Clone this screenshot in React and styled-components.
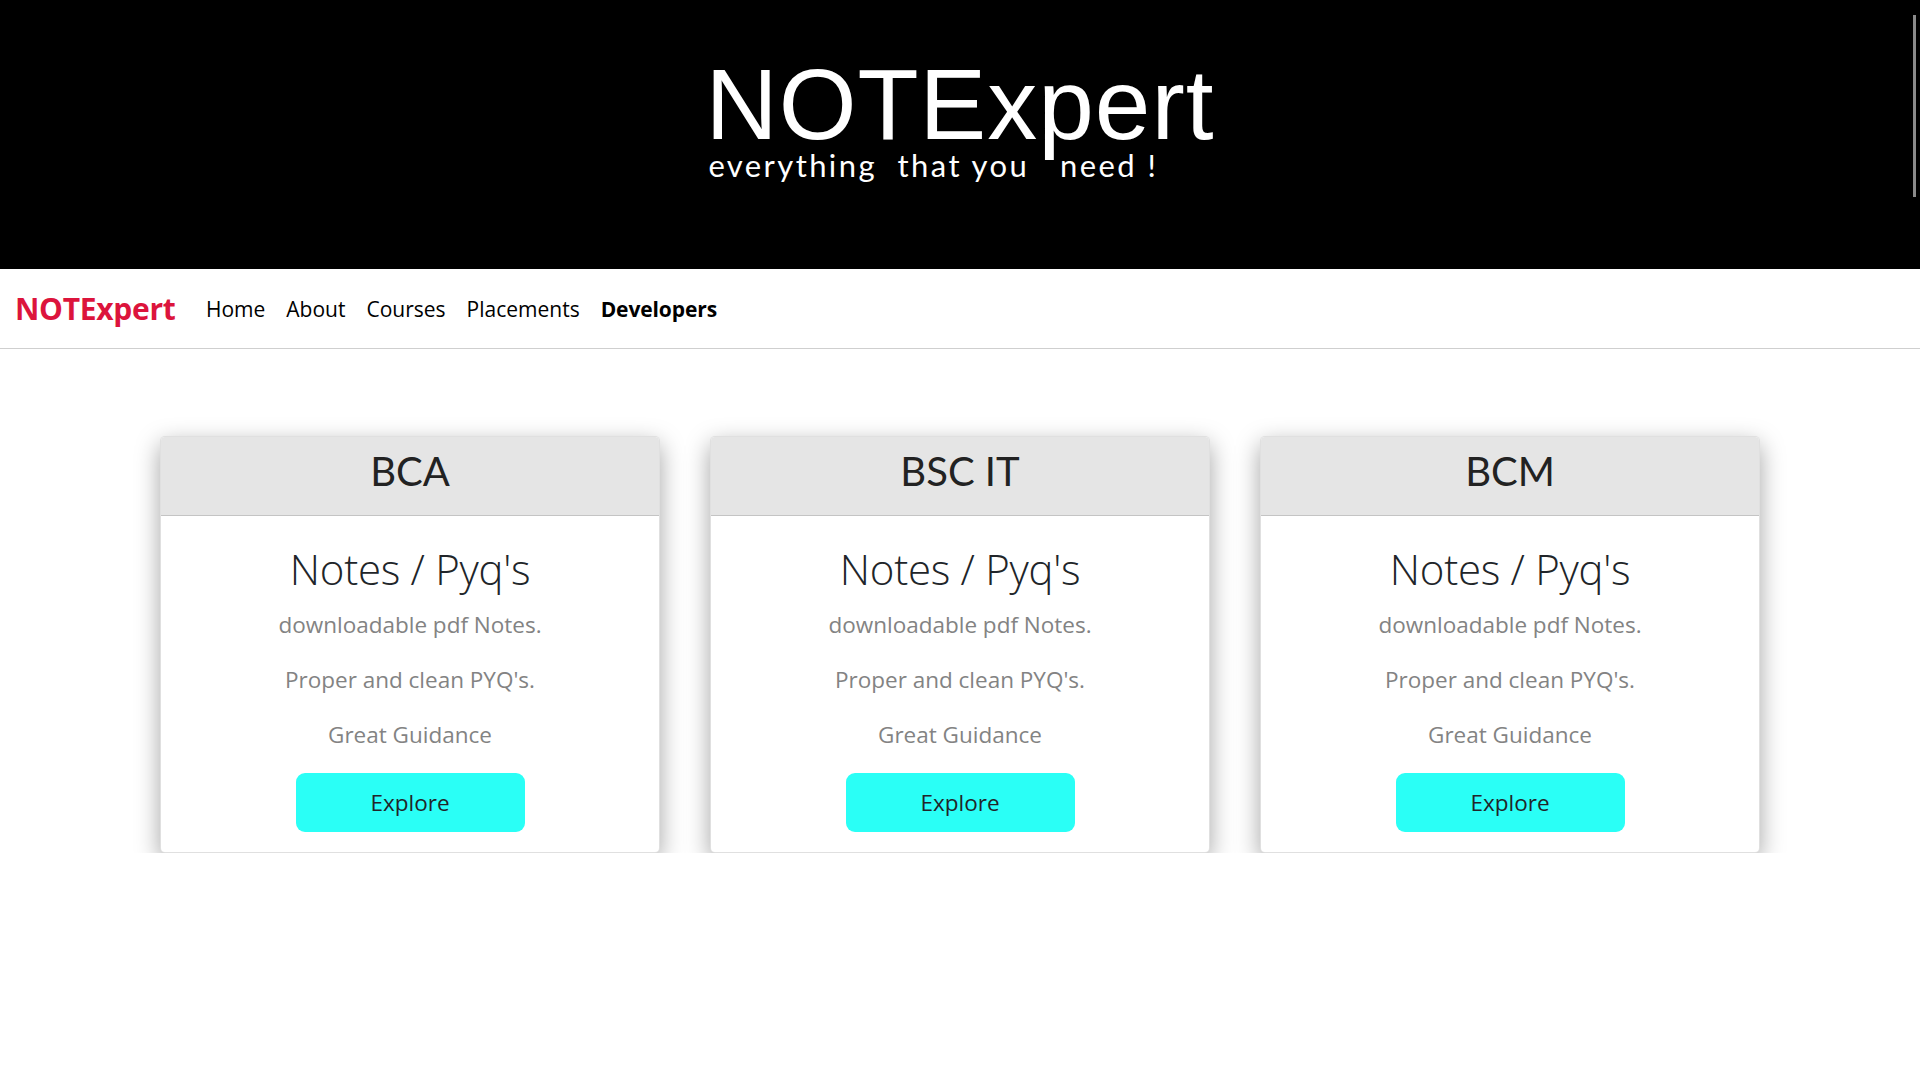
import React from 'react';
import styled, { createGlobalStyle } from 'styled-components';

const GlobalStyle = createGlobalStyle`
  * {
    box-sizing: border-box;
  }

  body {
    margin: 0;
    background: #fff;
    font-family: 'Open Sans', 'Noto Sans', sans-serif;
    color: #212529;
  }
`;

// top black banner with the big logo text
const Banner = styled.header`
  position: relative;
  height: 269px;
  background: #000;
  color: #fff;
  display: flex;
  flex-direction: column;
  align-items: center;
  padding-top: 59px;

  &::after {
    content: '';
    position: absolute;
    right: 4px;
    top: 15px;
    width: 3px;
    height: 182px;
    background: #8a8a8a;
  }
`;

const BannerInner = styled.div`
  display: flex;
  flex-direction: column;
  align-items: flex-start;
`;

const BannerTitle = styled.h1`
  margin: 0;
  font-family: 'Liberation Sans', Arial, sans-serif;
  font-weight: 400;
  font-size: 100px;
  line-height: 90px;
  letter-spacing: 1px;
`;

const BannerTagline = styled.p`
  margin: 1px 0 0 3px;
  font-family: 'Lato', 'Noto Sans', sans-serif;
  font-size: 31px;
  line-height: 1;
  white-space: pre;
  letter-spacing: 2.4px;
`;

const Navbar = styled.nav`
  height: 80px;
  display: flex;
  align-items: center;
  padding: 0 15px;
  border-bottom: 1px solid #cfcfcf;
`;

const Brand = styled.a`
  font-family: 'Open Sans', sans-serif;
  font-weight: 700;
  font-size: 30px;
  color: #dc143c;
  text-decoration: none;
  margin-right: 20px;
  letter-spacing: -0.3px;
`;

const NavLinks = styled.ul`
  display: flex;
  list-style: none;
  margin: 0;
  padding: 0;
`;

const NavLink = styled.a`
  display: block;
  padding: 0 10.5px;
  font-size: 21px;
  color: #000;
  text-decoration: none;
  font-weight: ${(p) => (p.$active ? 700 : 400)};
  letter-spacing: ${(p) => (p.$active ? '-0.1px' : '0')};
`;

const CardRow = styled.main`
  width: 1600px;
  margin: 87px auto 0;
  display: flex;
  gap: 50px;
`;

const Card = styled.section`
  flex: 1;
  background: #fff;
  border: 1px solid rgba(0, 0, 0, 0.12);
  border-radius: 5px;
  box-shadow: 0 8px 24px rgba(0, 0, 0, 0.36);
  overflow: hidden;
  text-align: center;
`;

const CardHeader = styled.div`
  height: 79px;
  background: #e5e5e5;
  border-bottom: 1px solid #c4c4c4;
  padding-top: 10px;
`;

const CardTitle = styled.h2`
  margin: 0;
  font-family: 'Lato', 'Noto Sans', sans-serif;
  font-weight: 400;
  font-size: 40px;
  line-height: 48px;
  color: #222;
`;

const CardBody = styled.div`
  padding: 26px 20px 20px;
  display: flex;
  flex-direction: column;
  align-items: center;
`;

const Heading = styled.h3`
  margin: 0 0 12px;
  font-weight: 300;
  font-size: 42px;
  line-height: 54px;
  letter-spacing: -0.3px;
  color: #212529;
`;

const Feature = styled.p`
  margin: 0 0 22px;
  font-size: 22.5px;
  line-height: 33px;
  color: #838383;
`;

const ExploreButton = styled.button`
  width: 229px;
  height: 59px;
  border: none;
  border-radius: 9px;
  background: #2afff6;
  color: #212529;
  font-family: 'Open Sans', sans-serif;
  font-size: 22.5px;
  cursor: pointer;
`;

const courses = ['BCA', 'BSC IT', 'BCM'];
const links = ['Home', 'About', 'Courses', 'Placements', 'Developers'];

const App = () => {
  return (
    <>
      <GlobalStyle />
      <Banner>
        <BannerInner>
          <BannerTitle>NOTExpert</BannerTitle>
          <BannerTagline>{'everything  that you   need !'}</BannerTagline>
        </BannerInner>
      </Banner>
      <Navbar>
        <Brand href="#">NOTExpert</Brand>
        <NavLinks>
          {links.map((l) => (
            <li key={l}>
              <NavLink href="#" $active={l === 'Developers'}>{l}</NavLink>
            </li>
          ))}
        </NavLinks>
      </Navbar>
      <CardRow>
        {courses.map((c) => (
          <Card key={c}>
            <CardHeader>
              <CardTitle>{c}</CardTitle>
            </CardHeader>
            <CardBody>
              <Heading>Notes / Pyq's</Heading>
              <Feature>downloadable pdf Notes.</Feature>
              <Feature>Proper and clean PYQ's.</Feature>
              <Feature>Great Guidance</Feature>
              <ExploreButton>Explore</ExploreButton>
            </CardBody>
          </Card>
        ))}
      </CardRow>
    </>
  );
};

export default App;
